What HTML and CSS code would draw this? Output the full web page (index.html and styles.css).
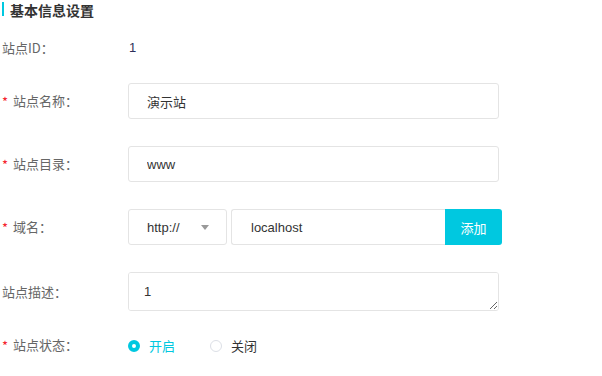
FILE: index.html
```html
<!DOCTYPE html>
<html lang="zh-CN">
<head>
  <meta charset="UTF-8">
  <title>基本信息设置</title>
  <link rel="stylesheet" href="styles.css">
</head>
<body>
<div class="panel">
  <h2 class="title">基本信息设置</h2>

  <div class="row row-id">
    <label class="label">站点ID：</label>
    <div class="value">1</div>
  </div>

  <div class="row">
    <label class="label"><span class="star">*</span>站点名称：</label>
    <input class="field" type="text" value="演示站">
  </div>

  <div class="row">
    <label class="label"><span class="star">*</span>站点目录：</label>
    <input class="field" type="text" value="www">
  </div>

  <div class="row">
    <label class="label"><span class="star">*</span>域名：</label>
    <div class="domain">
      <div class="select">
        <span>http://</span>
        <span class="arrow"></span>
      </div>
      <input class="field host" type="text" value="localhost">
      <button class="btn-add" type="button">添加</button>
    </div>
  </div>

  <div class="row row-desc">
    <label class="label">站点描述：</label>
    <textarea class="field area">1</textarea>
  </div>

  <div class="row">
    <label class="label"><span class="star">*</span>站点状态：</label>
    <div class="radios">
      <span class="radio checked"><i></i>开启</span>
      <span class="radio"><i></i>关闭</span>
    </div>
  </div>
</div>
</body>
</html>
```

FILE: styles.css
```css
* {
  margin: 0;
  padding: 0;
  box-sizing: border-box;
}

body {
  font-family: "Noto Sans CJK SC", "Liberation Sans", sans-serif;
  font-size: 13px;
  color: #333;
  background: #fff;
}

.panel {
  width: 602px;
  padding-left: 2px;
}

.title {
  font-size: 14px;
  font-weight: bold;
  color: #333;
  height: 22px;
  line-height: 22px;
  margin-bottom: 17px;
  display: flex;
  align-items: center;
  margin-top: -1px;
}

.title::before {
  content: "";
  display: inline-block;
  width: 2px;
  height: 14px;
  background: #00c8e0;
  margin-right: 6px;
  margin-top: -3px;
}

.row {
  display: flex;
  align-items: center;
  margin-bottom: 27px;
}

.row-id {
  margin-bottom: 25px;
}

.row-desc {
  margin-bottom: 24px;
}

.label {
  width: 126px;
  flex-shrink: 0;
  color: #666;
  line-height: 20px;
  display: flex;
}

.star {
  width: 11px;
  color: #f5222d;
  margin-top: 1px;
}

.value {
  line-height: 20px;
  color: #2d2f5a;
  padding-left: 1px;
  font-family: "Liberation Sans", sans-serif;
}

.field {
  width: 371px;
  height: 36px;
  border: 1px solid #e4e4e4;
  border-radius: 3px;
  padding: 0 18px;
  font-size: 13px;
  font-family: "Liberation Sans", "Noto Sans CJK SC", sans-serif;
  color: #333;
  outline: none;
  background: #fff;
}

.domain {
  display: flex;
  align-items: center;
}

.select {
  width: 99px;
  height: 36px;
  border: 1px solid #e4e4e4;
  border-radius: 3px;
  display: flex;
  align-items: center;
  justify-content: space-between;
  padding: 0 17px 0 18px;
  font-family: "Liberation Sans", sans-serif;
}

.arrow {
  width: 0;
  height: 0;
  border-left: 4px solid transparent;
  border-right: 4px solid transparent;
  border-top: 5px solid #999;
}

.host {
  width: 214px;
  margin-left: 4px;
  padding-left: 19px;
  border-radius: 3px 0 0 3px;
  border-right: none;
}

.btn-add {
  width: 57px;
  height: 36px;
  border: none;
  border-radius: 0 3px 3px 0;
  background: #00c8e0;
  color: #fff;
  font-size: 13px;
  font-family: "Noto Sans CJK SC", sans-serif;
}

.area {
  height: 39px;
  padding: 9px 15px;
  line-height: 20px;
  resize: vertical;
}

.radios {
  display: flex;
  align-items: center;
  line-height: 20px;
}

.radio {
  display: flex;
  align-items: center;
  color: #333;
  margin-right: 35px;
}

.radio i {
  width: 12px;
  height: 12px;
  border-radius: 50%;
  border: 1px solid #dcdfe6;
  margin-right: 9px;
  background: #fff;
}

.radio.checked {
  color: #00c8e0;
}

.radio.checked i {
  border: 4px solid #00c8e0;
}
```
